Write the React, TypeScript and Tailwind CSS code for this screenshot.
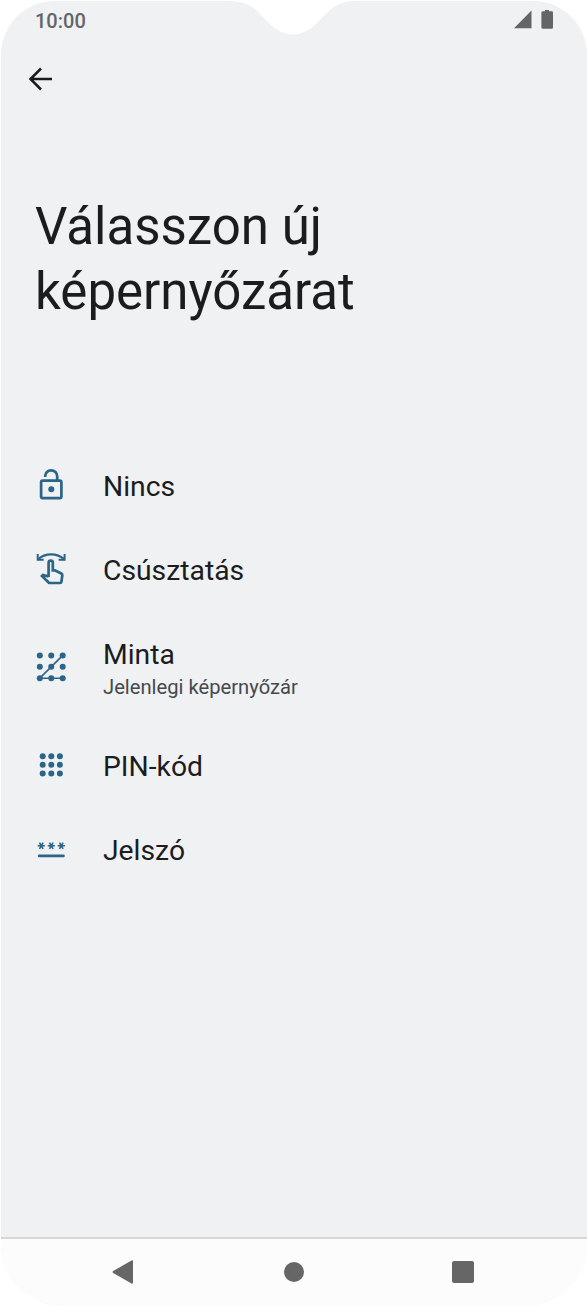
import type { ReactNode } from 'react';

type LockOption = {
  title: string;
  summary?: string;
  icon: ReactNode;
};

const DOT_POSITIONS = [0, 1, 2].flatMap((row) => [0, 1, 2].map((col) => ({ row, col })));

const UnlockedIcon = () => (
  <svg viewBox="0 0 34 34" className="h-[34px] w-[34px] fill-none stroke-[#2b6587] stroke-[2.7]">
    <rect x="7.1" y="12.6" width="20.3" height="17.5" rx="1.6" />
    <path d="M11.2 9V8.2a6 5.9 0 0 1 12 0v4.4" />
    <circle cx="17.3" cy="21.3" r="3" className="fill-[#2b6587] stroke-none" />
  </svg>
);

const SwipeIcon = () => (
  <svg viewBox="0 0 34 34" className="h-[34px] w-[34px] fill-none stroke-[#2b6587]">
    <path d="M3.7 2v5.8h6M30.6 2v5.8h-6" strokeWidth="2" />
    <path d="M4 7.3Q9.5 2.4 17.1 2.4T30.3 7.3" strokeWidth="2.3" />
    <path
      d="M14.6 25.1V10.7a2.1 2.1 0 0 1 4.2 0v7.6h2l6.5 3.2q1.2.7 1 2l-.9 6.2q-.2 1.3-1.4 1.3H16q-1 0-1.6-.7L8 24.1l1-1 5.6 1.4"
      strokeWidth="2.7"
    />
  </svg>
);

const PatternIcon = () => (
  <svg viewBox="0 0 34 34" className="h-[34px] w-[34px] fill-[#2b6587]">
    <path d="M28.7 5.4 5.8 28.3h22.9" className="fill-none stroke-[#2b6587]" strokeWidth="1.6" />
    {DOT_POSITIONS.map(({ row, col }) => (
      <circle key={`${row}-${col}`} cx={5.8 + col * 11.45} cy={5.4 + row * 11.45} r="3" />
    ))}
  </svg>
);

const PinIcon = () => (
  <svg viewBox="0 0 34 34" className="h-[34px] w-[34px] fill-[#2b6587]">
    {DOT_POSITIONS.map(({ row, col }) => (
      <circle key={`${row}-${col}`} cx={8.7 + col * 8.6} cy={8.2 + row * 8.6} r="3" />
    ))}
  </svg>
);

const PasswordIcon = () => (
  <svg viewBox="0 0 34 34" className="h-[34px] w-[34px] fill-none stroke-[#2b6587]">
    {[7.3, 17.3, 27.3].map((x) => (
      <path
        key={x}
        d={`M${x - 3.6} 13.8h7.2M${x - 1.8} 10.7l3.6 6.2M${x + 1.8} 10.7l-3.6 6.2`}
        strokeWidth="1.6"
      />
    ))}
    <path d="M5.2 23.9h24.2" strokeWidth="2.8" strokeLinecap="round" />
  </svg>
);

const options: LockOption[] = [
  { title: 'Nincs', icon: <UnlockedIcon /> },
  { title: 'Csúsztatás', icon: <SwipeIcon /> },
  { title: 'Minta', summary: 'Jelenlegi képernyőzár', icon: <PatternIcon /> },
  { title: 'PIN-kód', icon: <PinIcon /> },
  { title: 'Jelszó', icon: <PasswordIcon /> },
];

const StatusBar = () => (
  <div className="flex h-[38px] items-center justify-between pr-[33px] pl-[34px] text-[#646566]">
    <span className="pt-px text-[20px] leading-none font-medium">10:00</span>
    <svg viewBox="0 0 40 20" className="h-5 w-10 fill-[#646566]">
      <path d="M0 18.3 17.5.5v17.8z" />
      <path d="M31 0h4v1.2h2.6q1.4 0 1.4 1.3v14.9q0 1.4-1.4 1.4h-8.8q-1.4 0-1.4-1.4V2.5q0-1.3 1.4-1.3H31z" />
    </svg>
  </div>
);

const NavigationBar = () => (
  <nav className="flex h-[69px] items-center justify-between border-t-2 border-[#d6d7d8] bg-[#fcfcfc] pr-[113px] pb-px pl-[111px]">
    <svg viewBox="0 0 22 24" className="h-6 w-[22px] fill-[#666]">
      <path d="M1.2 11.1 19.5.6q1.5-.8 1.5.8v21.2q0 1.6-1.5.8L1.2 12.9q-1.5-.9 0-1.8z" />
    </svg>
    <span className="ml-0.5 h-5 w-5 rounded-full bg-[#666]" />
    <span className="h-[22px] w-[22px] rounded-[2px] bg-[#666]" />
  </nav>
);

const App = () => {
  return (
    <div className="h-[1306px] w-[587px] bg-white pt-px pl-px font-[Roboto,sans-serif]">
      <div className="relative flex h-[1305px] w-[586px] flex-col overflow-hidden rounded-t-[54px] rounded-b-[62px] bg-[#eff1f3]">
        <svg viewBox="0 0 128 34" className="absolute top-0 left-[228px] h-[34px] w-32 fill-white">
          <path d="M0 0C19 0 27 8 36 18C54 38.5 74 38.5 92 18C101 8 109 0 128 0z" />
        </svg>
        <StatusBar />
        <header className="flex h-20 items-center pl-[26px]">
          <svg viewBox="0 0 26 24" className="h-6 w-[26px] fill-none stroke-[#1b1c1e] stroke-[2.5]">
            <path d="M25 12H3.5M14 1.5 3.5 12 14 22.5" />
          </svg>
        </header>
        <h1 className="pt-[75px] pl-[34px] text-[51px] leading-[65px] text-[#1b1c1e]">
          Válasszon új
          <br />
          képernyőzárat
        </h1>
        <ul className="mt-[119px] flex-1">
          {options.map((option) => (
            <li
              key={option.title}
              className={`flex items-center gap-[34px] pl-[33px] ${option.summary ? 'h-[112px]' : 'h-[84px]'}`}
            >
              {option.icon}
              <div className={option.summary ? 'pt-[5px] pl-px' : 'pt-1 pl-px'}>
                <div className="text-[28.3px] leading-[34px] text-[#1b1c1e]">{option.title}</div>
                {option.summary && (
                  <div className="mt-px text-[20.2px] leading-7 text-[#45494d]">
                    {option.summary}
                  </div>
                )}
              </div>
            </li>
          ))}
        </ul>
        <NavigationBar />
      </div>
    </div>
  );
};

export default App;
